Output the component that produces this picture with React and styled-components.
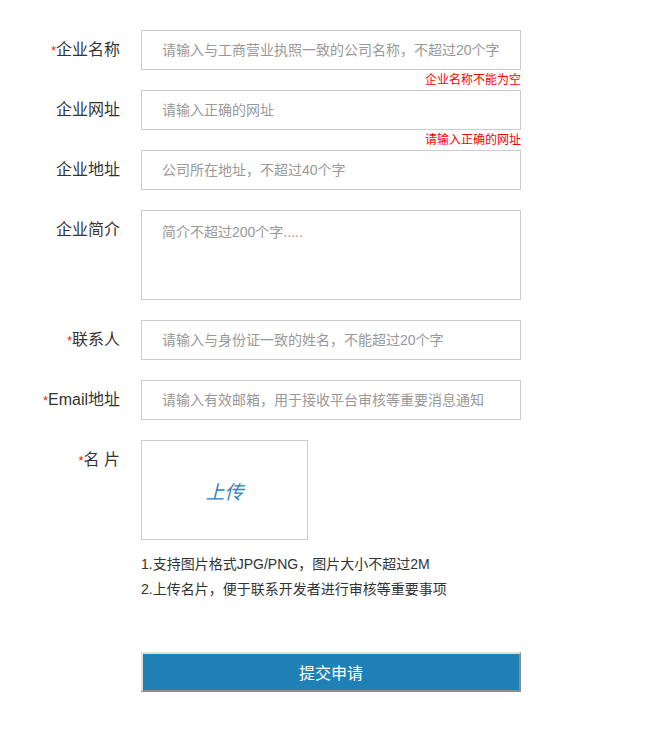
import styled, { createGlobalStyle } from 'styled-components';

//region [[ Styles ]]
const GlobalStyle = createGlobalStyle`
    body {
        margin: 0;
        background: #ffffff;
        font-family: "Liberation Sans", "Noto Sans CJK SC", sans-serif;
        color: #333333;
    }
`;

const Form = styled.form`
    padding-top: 30px;
    display: flex;
    flex-direction: column;
`;

const Row = styled.div`
    display: flex;
    align-items: flex-start;
    gap: 21px;
`;

const Label = styled.label`
    width: 120px;
    height: 40px;
    flex-shrink: 0;
    text-align: right;
    font-size: 16px;
    line-height: 40px;
    color: #333333;
    white-space: pre;
`;

const Star = styled.span`
    color: #e2231a;
    font-size: 13px;
    line-height: 1;
`;

const Input = styled.input`
    box-sizing: border-box;
    width: 380px;
    height: 40px;
    border: 1px solid #cccccc;
    padding: 0 20px;
    font-family: inherit;
    font-size: 14px;
    color: #333333;
    outline: none;

    &::placeholder {
        color: #999999;
    }
`;

const TextArea = styled.textarea`
    box-sizing: border-box;
    width: 380px;
    height: 90px;
    border: 1px solid #cccccc;
    padding: 10px 20px;
    font-family: inherit;
    font-size: 14px;
    line-height: 22px;
    resize: none;
    outline: none;

    &::placeholder {
        color: #999999;
    }
`;

const Hint = styled.div`
    margin-left: 141px;
    width: 380px;
    height: 20px;
    line-height: 20px;
    text-align: right;
    font-size: 12px;
    color: #ff0000;
`;

const UploadBox = styled.div`
    box-sizing: border-box;
    width: 167px;
    height: 100px;
    border: 1px solid #cccccc;
    display: flex;
    align-items: center;
    justify-content: center;
    font-size: 19px;
    font-style: italic;
    color: #2f86bf;
    cursor: pointer;
`;

const Notes = styled.div`
    margin: 12px 0 0 141px;
    font-size: 14px;
    line-height: 25px;
    color: #333333;
`;

const SubmitButton = styled.button`
    box-sizing: border-box;
    margin: 50px 0 0 141px;
    width: 380px;
    height: 40px;
    background: #1f80b5;
    color: #ffffff;
    font-family: inherit;
    font-size: 16px;
    border: 2px solid;
    border-color: #e0e0e0 #8c8c8c #8c8c8c #e0e0e0;
    cursor: pointer;
`;
//endregion [[ Styles ]]

const fields = [
    { label: '企业名称', required: true, placeholder: '请输入与工商营业执照一致的公司名称，不超过20个字', error: '企业名称不能为空' },
    { label: '企业网址', placeholder: '请输入正确的网址', error: '请输入正确的网址' },
    { label: '企业地址', placeholder: '公司所在地址，不超过40个字' },
    { label: '企业简介', placeholder: '简介不超过200个字.....', multiline: true },
    { label: '联系人', required: true, placeholder: '请输入与身份证一致的姓名，不能超过20个字' },
    { label: 'Email地址', required: true, placeholder: '请输入有效邮箱，用于接收平台审核等重要消息通知' },
];

function Field({ label, required, placeholder, error, multiline }) {
    return (
        <>
            <Row>
                <Label>
                    {required && <Star>*</Star>}
                    {label}
                </Label>
                {multiline ? <TextArea placeholder={placeholder} /> : <Input placeholder={placeholder} />}
            </Row>
            <Hint>{error}</Hint>
        </>
    );
}

export default function App() {
    return (
        <>
            <GlobalStyle />
            <Form onSubmit={(e) => e.preventDefault()}>
                {fields.map((f) => (
                    <Field key={f.label} {...f} />
                ))}
                <Row>
                    <Label>
                        <Star>*</Star>
                        {'名 片'}
                    </Label>
                    <UploadBox>上传</UploadBox>
                </Row>
                <Notes>
                    <div>1.支持图片格式JPG/PNG，图片大小不超过2M</div>
                    <div>2.上传名片，便于联系开发者进行审核等重要事项</div>
                </Notes>
                <SubmitButton type="submit">提交申请</SubmitButton>
            </Form>
        </>
    );
}
